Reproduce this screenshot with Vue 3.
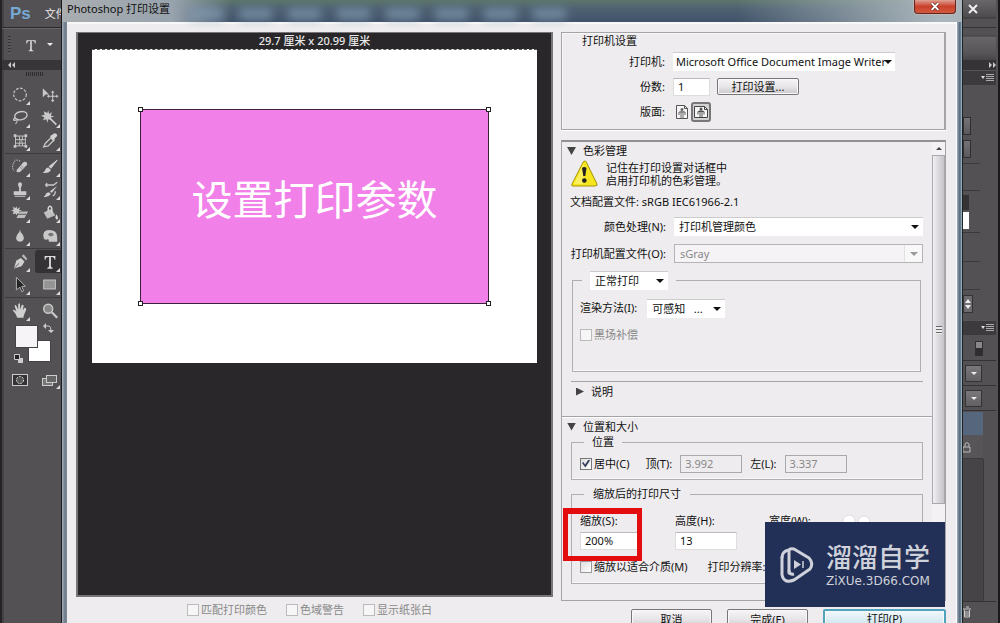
<script setup>
import { ref } from 'vue'

const copies = ref('1')
const scale = ref('200%')
const height = ref('13')
const centered = ref(true)

const toolGroups = [
  [
    ['marquee', 'move'],
    ['lasso', 'wand'],
    ['crop', 'dropper'],
  ],
  [
    ['heal', 'brush'],
    ['stamp', 'history'],
    ['eraser', 'bucket'],
    ['blur', 'sponge'],
  ],
  [
    ['pen', 'type'],
    ['path', 'shape'],
  ],
  [['hand', 'zoom']],
]

const icons = {
  marquee: '<circle cx="10" cy="9" r="7" fill="none" stroke="#c9c9c9" stroke-width="1.3" stroke-dasharray="3 1.6"/>',
  move: '<path d="M2 2v10l3-3h4z" fill="#c9c9c9"/><path d="M13 6v10M8 11h10" stroke="#c9c9c9" stroke-width="1.2"/><path d="M13 4.500l2 2.500h-4zM13 17.500l2-2.500h-4zM6.500 11l2.500-2v4zM19.500 11l-2.500-2v4z" fill="#c9c9c9"/>',
  lasso: '<ellipse cx="11" cy="7" rx="7" ry="4.500" transform="rotate(-12 11 7)" fill="none" stroke="#c9c9c9" stroke-width="1.500"/><path d="M5 10c-3 0-3 3 0 2s2 2 0 4" fill="none" stroke="#c9c9c9" stroke-width="1.200"/>',
  wand: '<path d="M8 8l9 9" stroke="#c9c9c9" stroke-width="2"/><path d="M8 1l1 4 3-2-1 4 4 1-4 1 1 3-4-1-1 4-1-4-4 1 2-3-4-2 4-1-1-4 4 2z" fill="#c9c9c9"/>',
  crop: '<path d="M5 4h11v11H5zM5 8h11M5 12h11M9 4q2 6 0 11M13 4q-2 6 0 11" fill="none" stroke="#c9c9c9"/><path d="M3 2h3v3H3zM15 2h3v3h-3zM3 14h3v3H3zM15 14h3v3h-3z" fill="#c9c9c9"/>',
  dropper: '<path d="M3 16l2-4 6-6 3 3-6 6z" fill="none" stroke="#c9c9c9" stroke-width="1.400"/><path d="M10 4l2-1 3-2q3 0 3 3l-3 3 0 2-1 1z" fill="#d2d2d2"/>',
  heal: '<path d="M7 12l7-8q4-1 4 3l-8 8q-4 1-4-1z" fill="#c9c9c9"/><path d="M10 10l4 3M11 8l4 3" stroke="#666" stroke-dasharray="1 1"/><path d="M10 3q-5-3-7 2-3 6 1 9" fill="none" stroke="#bbb" stroke-width="1.400" stroke-dasharray="1 1"/>',
  brush: '<path d="M18 2l-9 7 2 2z" fill="#d0d0d0" stroke="#d0d0d0"/><path d="M8 10l3 3q-2 4-9 3 3-2 3-4 1-2 3-2z" fill="#d0d0d0"/>',
  stamp: '<path d="M8 2q2-2 4 0 1 2-1 5v4h6v4H3v-4h6V7Q7 4 8 2zM4 16h12v1H4z" fill="#c9c9c9"/>',
  history: '<path d="M18 5l-8 6 2 2zM9 12l2 2q-3 4-8 3 3-2 3-4z" fill="#d0d0d0"/><path d="M5 4h9l4-3M5 4l2-2M5 4l2 2M13 16q3-1 3-5" fill="none" stroke="#c9c9c9" stroke-width="1.400"/>',
  eraser: '<path d="M6 2l1 3 3-2-1 3 3 1-3 1 1 3-3-1-1 2-1-2-3 1 1-3-3-1 3-1-1-3 3 1z" fill="#c9c9c9"/><path d="M10 8h9l-4 7H6z" fill="#bdbdbd"/><path d="M8 11h9" stroke="#555"/>',
  bucket: '<path d="M3 9l8-4 5 7-9 4z" fill="#bfbfbf"/><path d="M8 8V4q2-4 4 0v5" fill="none" stroke="#ddd" stroke-width="1.500"/><path d="M17 11q3 4 1 6-2 0-2-3z" fill="#ddd"/>',
  blur: '<path d="M10 2q0 4 3 6 4 7-3 8-7-1-3-8 3-3 3-6z" fill="#c9c9c9"/>',
  sponge: '<path d="M3 12q-2-9 6-9 9 0 9 8v5H9l-1-3q-3 2-5-1z" fill="#c9c9c9"/><ellipse cx="11" cy="8" rx="3" ry="2" fill="#777"/>',
  pen: '<path d="M3 17l3-9 5-3 4 4-3 5z" fill="#d0d0d0"/><path d="M3 17l6-6M12 3l5 5" stroke="#555"/><path d="M12 3l2-2 4 5-1 2z" fill="#bbb"/>',
  type: '<path d="M4 3h12v4h-1q0-3-3-3h-1v10q0 2 2 2v1H7v-1q2 0 2-2V4H8Q5 4 5 7H4z" fill="#ddd"/>',
  path: '<path d="M6 1v14l4-3 2 5 2-1-2-5h4z" fill="#252525" stroke="#bbb"/>',
  shape: '<rect x="3" y="4" width="13" height="10" fill="#949494" stroke="#ccc"/>',
  hand: '<path d="M7 17q-1-4-5-8 1-2 4 1L4 4q1-2 2 0l2 4V2q2-2 2 0v6l2-5q2-1 2 1l-1 5 2-3q2 0 2 2l-3 7v2z" fill="#d0d0d0"/>',
  zoom: '<circle cx="8" cy="7" r="5" fill="#888" stroke="#c9c9c9" stroke-width="1.600"/><path d="M12 11l6 6" stroke="#c9c9c9" stroke-width="2.500"/>',
}

const previewOptions = ['匹配打印颜色', '色域警告', '显示纸张白']
</script>

<template>
  <div class="screen">
    <aside class="tools">
      <div class="menubar"><b class="ps">Ps</b><span>文件</span></div>
      <div class="options">
        <i class="dots"></i>
        <svg class="opt-t" viewBox="0 0 20 18" v-html="icons.type"></svg>
        <i class="tri-down light"></i>
      </div>
      <div class="collapse"><svg width="8" height="6" viewBox="0 0 8 6"><path d="M3 0v6L0 3zM7 0v6L4 3z" fill="#ccc" /></svg></div>
      <div class="grip"></div>
      <div v-for="(group, g) in toolGroups" :key="g" class="group">
        <template v-for="row in group">
          <button v-for="name in row" :key="name" class="tool" :class="{ active: name === 'type' }" :aria-label="name">
            <svg viewBox="0 0 20 18" v-html="icons[name]"></svg>
            <i v-if="name !== 'zoom' && name !== 'move'" class="corner"></i>
          </button>
        </template>
      </div>
      <svg class="swatches" viewBox="0 3 60 67">
        <rect x="28.500" y="20.500" width="22" height="21" fill="#fff" stroke="#444" />
        <rect x="15.500" y="5.500" width="22" height="22" fill="#f6f4f6" stroke="#444" />
        <path d="M45 6h4q2 0 2 5" stroke="#ccc" fill="none" /><path d="M46 3v6l-3-3zM48 10h6l-3 3z" fill="#ccc" />
        <path d="M18 38h5v5h-5z" fill="#ccc" /><path d="M14.500 34.500h5v5h-5z" fill="#222" stroke="#ccc" />
        <rect x="12.500" y="54.500" width="15" height="11" fill="#333" stroke="#ccc" />
        <circle cx="20" cy="60" r="3.500" fill="#555" stroke="#ddd" stroke-dasharray="2 1" />
        <rect x="42.500" y="58.500" width="10" height="7" fill="#777" stroke="#ccc" />
        <rect x="46.500" y="55.500" width="10" height="7" fill="#666" stroke="#ccc" />
        <path d="M60 65v4h-4z" fill="#ddd" />
      </svg>
    </aside>

    <main class="dialog">
      <header class="title">
        <h1>Photoshop 打印设置</h1>
        <div class="ghosts"><i v-for="n in 8" :key="n"></i></div>
        <button class="close" aria-label="关闭">
          <svg width="10" height="9" viewBox="0 0 12 10"><path d="M2 1l8 8M10 1L2 9" stroke="#6a2a22" stroke-width="4" /><path d="M2 1l8 8M10 1L2 9" stroke="#fff" stroke-width="2.400" /></svg>
        </button>
      </header>

      <div class="body">
        <section class="left">
          <div class="preview">
            <div class="dims">29.7 厘米 x 20.99 厘米</div>
            <div class="paper">
              <div class="art">
                <i class="h tl"></i><i class="h tr"></i><i class="h bl"></i><i class="h br"></i>
                设置打印参数
              </div>
            </div>
          </div>
          <div class="checks">
            <label v-for="o in previewOptions" :key="o" class="check off"><input type="checkbox" disabled />{{ o }}</label>
          </div>
        </section>

        <section class="right">
          <div class="printer">
            <h2>打印机设置</h2>
            <div class="prow">
              <label for="printer">打印机:</label>
              <span class="sel w-printer"><select id="printer"><option>Microsoft Office Document Image Writer</option></select></span>
            </div>
            <div class="prow">
              <label for="copies">份数:</label>
              <input id="copies" v-model="copies" class="text w-copies" />
              <button class="btn setup">打印设置...</button>
            </div>
            <div class="prow">
              <span class="lab">版面:</span>
              <button class="orient" aria-label="纵向">
                <svg width="14" height="16" viewBox="0 0 14 16"><path d="M1.500 1.500h8l3 3v10h-11z" fill="#f6f6f6" stroke="#555" /><path d="M9.500 1.500v3h3" fill="none" stroke="#555" /><circle cx="7" cy="5.500" r="1.500" fill="#666" /><path d="M4 11V8h6v3M6 7v7M8 7v7" stroke="#666" fill="none" /></svg>
              </button>
              <button class="orient on" aria-label="横向">
                <svg width="16" height="14" viewBox="0 0 16 14"><path d="M1.500 1.500h10l3 3v8h-13z" fill="#f6f6f6" stroke="#444" /><path d="M11.500 1.500v3h3" fill="none" stroke="#444" /><circle cx="8" cy="4" r="1.500" fill="#555" /><path d="M5 9.500v-3h6v3M7 5v7M9 5v7" stroke="#555" fill="none" /></svg>
              </button>
            </div>
          </div>

          <div class="panel">
            <div class="content">
              <h2 class="fold"><i class="tri"></i>色彩管理</h2>
              <div class="warn">
                <svg width="30" height="28" viewBox="0 0 30 28">
                  <path d="M16 3l12 23H4z" fill="#999" opacity=".6" />
                  <path d="M13.500 1.500q1.500-1 2.500 0L27 24q0 2-2 2H3q-2 0-1-2z" fill="#f7e520" stroke="#a59500" />
                  <path d="M14 3L4 24h9z" fill="#fff78a" opacity=".6" />
                  <path d="M12 8q2-2 4.500 0l-1.200 8h-2z" fill="#222" /><circle cx="14.300" cy="20.500" r="2.300" fill="#222" />
                </svg>
                <p>记住在打印设置对话框中<br />启用打印机的色彩管理。</p>
              </div>
              <p class="profile">文档配置文件: sRGB IEC61966-2.1</p>
              <div class="crow">
                <label for="handling">颜色处理(N):</label>
                <span class="sel"><select id="handling"><option>打印机管理颜色</option></select></span>
              </div>
              <div class="crow">
                <label for="prof">打印机配置文件(O):</label>
                <span class="sel disabled"><select id="prof" disabled><option>sGray</option></select></span>
              </div>
              <fieldset class="render">
                <legend><span class="sel w-mode"><select aria-label="打印模式"><option>正常打印</option></select></span></legend>
                <div class="rrow">
                  <label for="intent">渲染方法(I):</label>
                  <span class="sel w-mode"><select id="intent"><option>可感知 &nbsp; ...</option></select></span>
                </div>
                <label class="check off"><input type="checkbox" disabled />黑场补偿</label>
              </fieldset>
              <h2 class="fold desc"><i class="tri closed"></i>说明</h2>
              <h2 class="fold size"><i class="tri"></i>位置和大小</h2>
              <fieldset class="pos">
                <legend>位置</legend>
                <label class="check"><input v-model="centered" type="checkbox" />居中(C)</label>
                <label class="pair first">顶(T):<input class="text" value="3.992" disabled /></label>
                <label class="pair">左(L):<input class="text" value="3.337" disabled /></label>
              </fieldset>
              <fieldset class="scaled">
                <legend>缩放后的打印尺寸</legend>
                <div class="three">
                  <label>缩放(S):<input v-model="scale" class="text" /></label>
                  <label>高度(H):<input v-model="height" class="text" /></label>
                  <label>宽度(W):</label>
                  <svg class="link" width="30" height="16" viewBox="0 0 30 16"><circle cx="9" cy="8" r="6" fill="#fff" stroke="#ddd" /><circle cx="24" cy="9" r="6" fill="#fff" stroke="#ddd" /></svg>
                </div>
                <div class="fit">
                  <label class="check"><input type="checkbox" />缩放以适合介质(M)</label>
                  <span>打印分辨率:</span>
                </div>
              </fieldset>
              <div class="redbox"></div>
            </div>
            <div class="scroll">
              <i class="up"></i>
              <div class="thumb"><i></i></div>
            </div>
            <div class="mark">
              <svg width="36" height="38" viewBox="0 0 36 38" fill="none" stroke="#cfd2da">
                <path d="M10 27V5q0-3 5-2l15 9q5 5 1 11L15 34Q5 38 3 29V11" stroke-width="3" stroke-linecap="round" stroke-linejoin="round" />
                <path d="M10 4Q3 5 3 12M10 24q0 5 5 4" stroke-width="3" />
                <path d="M15 14v9l7-4.500z" fill="#cfd2da" stroke="none" /><path d="M24 15v7" stroke-width="1.500" />
              </svg>
              <div><b>溜溜自学</b><span>ZiXUe.3D66.COM</span></div>
            </div>
          </div>
          <footer>
            <button class="btn">取消</button>
            <button class="btn">完成(E)</button>
            <button class="btn primary">打印(P)</button>
          </footer>
        </section>
      </div>
    </main>

    <aside class="dock">
      <div class="d-top"><svg width="10" height="10" viewBox="0 0 10 10"><path d="M1 1l8 8M9 1L1 9" stroke="#eee" stroke-width="2" /></svg></div>
      <div class="d-opt"></div>
      <div class="d-bar"><svg width="8" height="6" viewBox="0 0 8 6"><path d="M1 0v6l3-3zM5 0v6l3-3z" fill="#ccc" /></svg></div>
      <div class="d-tab"><i class="menu"></i></div>
      <div class="d-adj">
        <i class="stub"></i><i class="stub"></i>
        <i class="rule"></i>
        <i class="rule r2"></i><i class="dark"></i><i class="white"></i>
        <i class="rule r3"></i><i class="rule r4"></i><i class="rule r5"></i>
        <svg class="spin" width="11" height="18" viewBox="0 0 11 18"><rect x=".5" y=".5" width="9" height="17" fill="#6d6b6d" stroke="#343234" /><path d="M5 4l3 4H2zM5 14l3-4H2z" fill="#eee" /></svg>
      </div>
      <div class="d-tab"><i class="menu"></i></div>
      <div class="d-switch"><i></i></div>
      <div class="d-drop"><span><i class="tri-down light"></i></span></div>
      <div class="d-drop"><span><i class="tri-down light"></i></span></div>
      <div class="d-layer"></div>
      <div class="d-lock"><svg width="8" height="12" viewBox="0 0 8 12"><path d="M2 6V3q2-3 4 0v3M0 6h7v5H0z" fill="none" stroke="#bbb" /></svg></div>
      <div class="d-rest"></div>
      <div class="d-foot"><svg width="9" height="12" viewBox="0 0 9 12"><path d="M0 3h8M3 1h3M1.500 4v7h5V4M3 5v5M5 5v5" fill="none" stroke="#ccc" /></svg></div>
    </aside>
  </div>
</template>

<style>
body { margin: 0; background: #4d4b4d; overflow: hidden; }
</style>

<style scoped>
* { box-sizing: border-box; }
.screen { display: flex; height: 100vh; overflow: hidden; font: 11px/16px "Noto Sans", "Noto Sans CJK SC", sans-serif; color: #111; }
button, input, select { font: inherit; color: inherit; margin: 0; padding: 0; border-radius: 0; }
h1, h2, p { margin: 0; font-size: 11px; font-weight: 400; }

/* tool strip */
.tools { flex: none; width: 62px; background: #535153; border-left: 2px solid #252325; border-right: 1px solid #1c1a1c; overflow: hidden; box-shadow: inset 2px 0 #454345; }
.menubar { display: flex; align-items: center; gap: 14px; height: 28px; padding-left: 8px; color: #eee; white-space: nowrap; border-bottom: 1px solid #2b292b; }
.ps { font: bold 17px/22px "Liberation Sans", sans-serif; color: #76a9d6; }
.options { display: flex; align-items: center; height: 32px; padding-left: 6px; border-top: 1px solid #686668; }
.dots { width: 3px; height: 18px; background: repeating-linear-gradient(#333 0 1px, #5a585a 1px 3px); }
.opt-t { width: 16px; height: 14px; margin: 0 8px 0 12px; }
.tri-down { display: block; width: 0; border: 3px solid transparent; border-top: 3px solid #111; border-bottom: 0; }
.tri-down.light { border-top-color: #eee; }
.collapse { display: flex; align-items: center; height: 10px; padding-left: 6px; background: #373537; }
.grip { height: 4px; margin: 2px 18px 6px 24px; background: repeating-linear-gradient(90deg, #2e2c2e 0 1px, #535153 1px 2px); }
.group { display: grid; grid-template-columns: 30px 30px; grid-auto-rows: 23px; padding: 1px 0; border-bottom: 1px solid #3d3b3d; margin-left: 3px; }
.tool { position: relative; display: grid; place-items: center; border: 0; background: none; }
.tool svg { width: 18px; height: 17px; }
.tool.active { background: #343234; border-radius: 3px; }
.corner { position: absolute; right: 5px; bottom: 1px; border: 2px solid #ddd; border-top-color: transparent; border-left-color: transparent; }
.group:last-of-type { border-bottom: 0; }
.swatches { display: block; width: 60px; height: 67px; margin-left: -2px; }

/* dialog */
.dialog { flex: 1; min-width: 0; padding: 0 6px 0 5px; background: linear-gradient(90deg, #a5b0bd, #6d7b8a 3px, #8391a0 6px, transparent 6px), linear-gradient(90deg, #74808c calc(100% - 7px), #b7c5d1 calc(100% - 6px), #4f6475 calc(100% - 2px), #a9c1d0 100%); }
.title { position: relative; display: flex; align-items: flex-start; justify-content: space-between; height: 22px; margin: 0 -6px 0 -5px; padding: 1px 6px 0 5px; background: linear-gradient(90deg, #a9adb0 0, #98a3ad 110px, transparent 170px), linear-gradient(90deg, transparent 75%, #a9b5ba 97%), linear-gradient(#5c756b, #4e6172 9px, #41536a); }
.close { height: 14px; width: 42px; margin-top: -1px; border: 1px solid #5d2822; border-top: 0; border-radius: 0 0 4px 4px; background: linear-gradient(#dfa192, #c9402b 50%, #d35b3f); box-shadow: 0 0 0 1px #c3b6b4; display: grid; place-items: center; }
.ghosts { flex: 1; display: flex; gap: 16px; margin: 7px 24px 0 20px; }
.ghosts i { width: 33px; height: 12px; background: #819bb1; opacity: .7; filter: blur(5px); }
.body { display: flex; gap: 8px; padding: 8px 10px 0 9px; min-height: 620px; background: #eeecee; border-top: 2px solid #f8f8f8; box-shadow: 0 -1px #303b46, 1px 0 #fff; }
.left { flex: 1; min-width: 0; }
.preview { height: 565px; border: 2px solid #777579; border-top-width: 1px; background: #29272a; padding: 0 14px; }
.dims { color: #e8e8e8; text-align: center; height: 16px; line-height: 16px; font-weight: 500; }
.paper { height: 314px; padding: 59px 48px; background: #fff; border-top: 1px dashed #555; }
.art { position: relative; display: grid; place-items: center; height: 195px; padding-bottom: 16px; border: 1px solid #3c203c; background: #f180e8; color: #fff; font-size: 41px; line-height: 48px; font-weight: 400; white-space: nowrap; }
.h { position: absolute; width: 5px; height: 5px; border: 1px solid #222; background: #fff; }
.tl, .tr { top: -3px; } .bl, .br { bottom: -3px; } .tl, .bl { left: -3px; } .tr, .br { right: -3px; }
.checks { display: flex; gap: 19px; padding: 5px 0 0 111px; }
.check { display: flex; align-items: center; gap: 2px; white-space: nowrap; }
.check.off { color: #888; }
.check input { appearance: none; width: 12px; height: 12px; border: 1px solid #999; background: linear-gradient(135deg, #ddd, #fff); }
.check.off input { border-color: #bbb; background: #f6f6f6; }
.check input:checked { display: grid; place-items: center; border-color: #777; }
.check input:checked::before { content: ""; width: 8px; height: 8px; background: #33415f; clip-path: polygon(0 45%, 18% 32%, 38% 62%, 82% 0, 100% 12%, 42% 100%); }

.right { flex: none; width: 385px; }
.printer { height: 98px; border: 1px solid #a5a3a7; border-width: 1px 2px 1px 1px; box-shadow: 0 1px #fff, inset 1px 1px #f8f8f8; }
.printer h2 { padding-left: 20px; height: 16px; }
.prow { display: grid; grid-template-columns: 103px auto auto 1fr; align-items: center; height: 25px; }
.prow > label, .lab { text-align: right; }
.prow > :nth-child(2) { margin-left: 8px; }
.sel { position: relative; display: block; height: 19px; background: #fff; border-top: 1px solid #ccc; }
.sel::after { content: ""; position: absolute; right: 4px; top: 7px; border: 4px solid transparent; border-top-color: #111; border-bottom: 0; pointer-events: none; }
.sel select { appearance: none; display: block; width: 100%; height: 18px; padding-left: 5px; line-height: 18px; border: 0; background: none; opacity: 1; }
.sel.disabled { border: 1px solid #b5b3b5; color: #888; background: linear-gradient(90deg, #f5f3f5 calc(100% - 18px), #ccc calc(100% - 18px), #f8f8f8 calc(100% - 17px)); }
.sel.disabled::after { border-top-color: #999; }
.sel.disabled select { height: 17px; }
.sel.w-printer { width: 222px; }
.sel.w-printer::after { right: 3px; }
.sel.w-printer select { padding-left: 3px; }
.w-mode { width: 78px; color: #111; }
.text { height: 18px; width: 62px; padding-left: 4px; border: 1px solid #ddd; border-top-color: #bbb; background: #fff; }
.text:disabled { border-color: #aaa; background: #eeecee; color: #888; }
.w-copies { width: 37px; }
.btn { height: 18px; border: 1px solid #777; border-radius: 2px; background: linear-gradient(#f6f4f6, #e8e6e8 50%, #cbc9cd); box-shadow: inset 0 0 0 1px #f8f8f8; line-height: 15px; }
.setup { width: 82px; margin-left: 7px; height: 17px; }
.orient { width: 18px; height: 20px; display: grid; place-items: center; border: 0; background: none; }
.orient.on { width: 20px; border: 2px solid #777; border-radius: 3px; background: #d4d2d4; }

.panel { position: relative; display: flex; height: 461px; margin-top: 10px; border: 1px solid #a5a3a7; border-top: 2px solid #929094; }
.content { position: relative; flex: 1; min-width: 0; }
.fold { display: flex; align-items: center; gap: 7px; padding-left: 5px; height: 18px; }
.tri { width: 9px; height: 8px; background: #444; clip-path: polygon(0 0, 100% 0, 50% 100%); }
.tri.closed { width: 8px; height: 8px; clip-path: polygon(0 0, 100% 50%, 0 100%); }
.warn { display: flex; gap: 6px; padding-left: 8px; height: 32px; line-height: 13px; }
.warn p { padding-top: 1px; }
.profile { padding-left: 8px; height: 21px; line-height: 20px; }
.crow { display: grid; grid-template-columns: 104px 1fr; gap: 8px; align-items: center; height: 27px; padding-right: 9px; }
.crow label { text-align: right; white-space: nowrap; }
fieldset { margin: 0; padding: 0; min-width: 0; border: 1px solid #b0aeb2; box-shadow: inset 0 -1px #f8f8f8; }
legend { padding: 0 8px; }
.render { margin: 4px 11px 0 10px; height: 101px; }
.render legend { margin-left: 9px; }
.render > .check { padding: 10px 0 0 7px; }
.rrow { display: flex; align-items: center; gap: 10px; padding: 9px 0 0 7px; height: 27px; }
.desc { margin: 9px 9px 0; height: 20px; border-top: 1px solid #a5a3a7; }
.size { margin-top: 15px; height: 20px; border-top: 1px solid #a5a3a7; box-shadow: inset 0 1px #fff; }
.pos { display: flex; align-items: center; margin: -2px 9px 0; height: 46px; }
.pos legend, .scaled legend { margin-left: 12px; }
.pos .check { padding: 0 0 2px 8px; }
.pair { display: flex; align-items: center; gap: 8px; margin-left: 8px; padding-bottom: 2px; }
.pair.first { margin-left: 16px; }
.scaled { margin: 6px 9px 0; height: 98px; }
.scaled legend { padding: 0 9px; }
.three { display: grid; grid-template-columns: 95px 94px 71px 30px; padding: 10px 0 0 8px; line-height: 18px; }
.three input { display: block; margin-top: 2px; }
.link { margin-top: 1px; }
.fit { display: flex; gap: 20px; padding: 9px 0 0 8px; }
.redbox { position: absolute; left: 1px; top: 366px; width: 79px; height: 53px; border: 5px solid #e30d10; border-top-width: 6px; pointer-events: none; }
.scroll { flex: none; width: 13px; background: #f3f1f3; }
.up { display: block; width: 0; margin: 5px auto 4px; border: 3px solid transparent; border-bottom-color: #444; border-top: 0; }
.thumb { display: grid; place-items: center; height: 349px; margin-top: 5px; border: 1px solid #aaa8ac; background: linear-gradient(90deg, #f2f0f4, #dad8dc 50%, #c6c4ca); }
.thumb i { width: 6px; height: 8px; background: repeating-linear-gradient(#666 0 1px, #eee 1px 3px); }
.mark { position: absolute; right: 0; top: 380px; width: 180px; height: 85px; display: flex; align-items: center; gap: 11px; padding-left: 14px; background: #222f56; color: #cfd2da; }
.mark b { display: block; font: 500 26px/28px "Noto Sans CJK SC", sans-serif; }
.mark span { display: block; margin-top: 4px; font: 12px/14px "DejaVu Sans", sans-serif; }
footer { display: flex; justify-content: flex-end; gap: 15px; padding-top: 8px; }
footer .btn { width: 81px; height: 20px; }
footer .primary { width: 123px; border: 2px solid #51a4bd; background: linear-gradient(#f1f8fb, #c9e3ec); line-height: 14px; }

/* panel dock */
.dock { flex: none; width: 38px; display: flex; flex-direction: column; background: #535153; border-left: 1px solid #222; border-right: 2px solid #19181a; overflow: hidden; padding-right: 2px; }
.dock > div { flex: none; }
.d-top { height: 28px; padding: 2px 0 0 5px; border-bottom: 1px solid #333; background: linear-gradient(#696769, #4d4b4d 17px, #383638 18px, #535153 19px); }
.d-opt { height: 32px; background: linear-gradient(#535153 7px, #3f3d3f 8px, #676567 9px, #575557 25px, #474547); }
.d-bar { height: 10px; display: flex; align-items: center; justify-content: flex-end; background: #353335; }
.d-tab { height: 15px; display: flex; align-items: center; justify-content: flex-end; background: #3c3a3c; border-top: 1px solid #555; }
.menu { position: relative; width: 8px; height: 8px; margin-right: 2px; background: repeating-linear-gradient(#aaa 0 1px, transparent 1px 2px); }
.menu::before { content: ""; position: absolute; left: -5px; top: 2px; border: 2px solid transparent; border-top: 3px solid #ddd; }
.d-adj { height: 235px; padding-top: 32px; }
.d-adj i { display: block; }
.stub { width: 8px; height: 18px; margin-bottom: 5px; border: 1px solid #302e30; background: linear-gradient(#757375, #5b595b); }
.rule { width: 17px; height: 1px; background: #3b393b; }
.r2 { margin-top: 26px; }
.dark { width: 6px; height: 15px; margin-top: 4px; background: #333; }
.white { width: 6px; height: 17px; margin-top: 2px; background: #fff; }
.r3 { margin-top: 3px; } .r4 { margin-top: 28px; } .r5 { margin-top: 27px; }
.spin { display: block; margin-top: 5px; }
.d-switch { height: 26px; padding: 6px 0 0 12px; border-bottom: 1px solid #343234; }
.d-switch i { display: block; width: 8px; height: 15px; border: 1px solid #303030; background: linear-gradient(#888 50%, #2f2d2f 50%); }
.d-drop { height: 25px; padding: 4px 0 0 2px; border-bottom: 1px solid #343234; }
.d-drop span { display: grid; place-items: center; width: 17px; height: 17px; border: 1px solid #333; background: linear-gradient(#7a787a, #626062); }
.d-layer { height: 23px; margin-top: 1px; width: 20px; background: #56677d; }
.d-lock { height: 24px; width: 20px; padding: 6px 0 0 0; background: #575557; border-bottom: 1px solid #3b393b; }
.dock > .d-rest { flex: 1; margin-right: 12px; background: #464446; border-right: 1px solid #3a383a; }
.d-foot { height: 22px; padding: 4px 0 0 0; border-top: 1px solid #333; }
</style>
